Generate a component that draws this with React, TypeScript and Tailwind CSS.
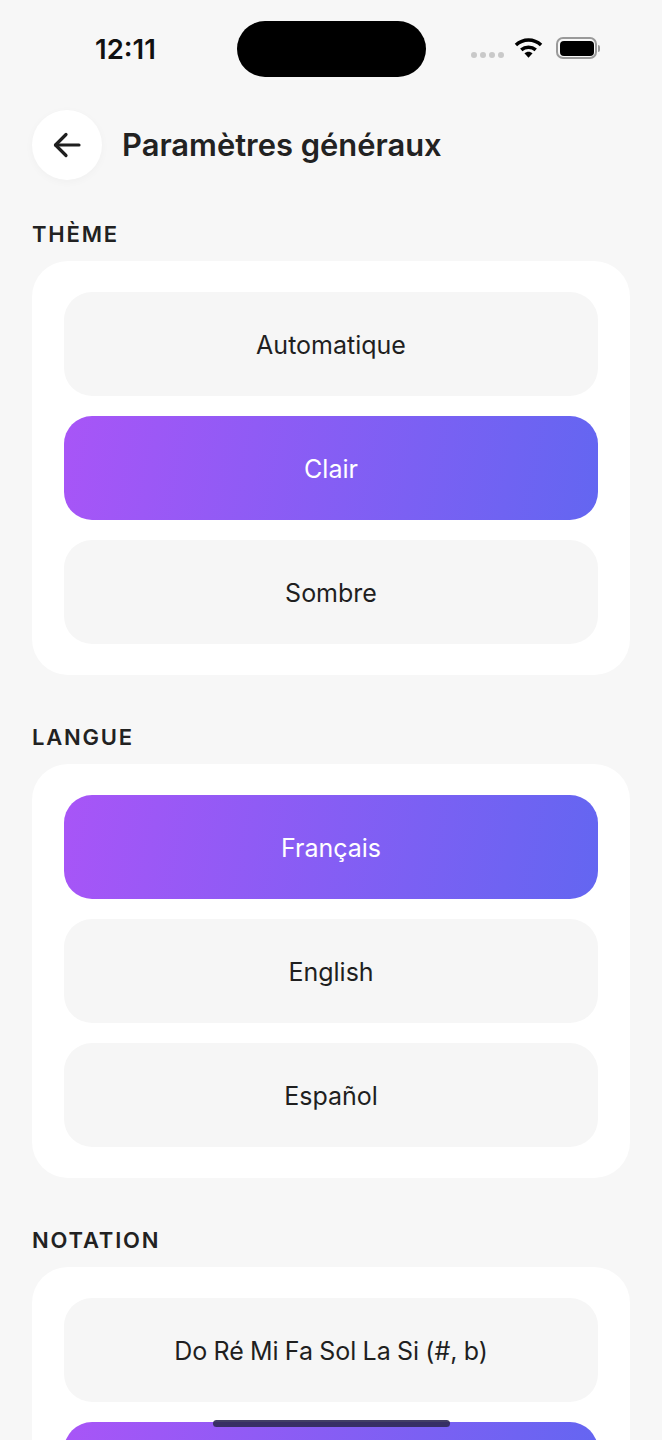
import React from "react";

// last notation option runs off the bottom of the screen, its label can't be seen
const sections = [
  { title: "THÈME", options: ["Automatique", "Clair", "Sombre"], active: 1 },
  { title: "LANGUE", options: ["Français", "English", "Español"], active: 0 },
  { title: "NOTATION", options: ["Do Ré Mi Fa Sol La Si (#, b)", ""], active: 1 },
];

const StatusBar = () => (
  <div className="relative flex h-[110px] items-start justify-between">
    <span className="ml-[95px] mt-[32px] text-[27.5px] leading-[34px] font-semibold text-[#111]">12:11</span>
    <div className="absolute left-[237px] top-[21px] h-[56px] w-[189px] rounded-[28px] bg-black" />
    <div className="mr-[62px] mt-[37px] flex items-center">
      <div className="mt-[14px] mr-[10px] flex gap-[3px]">
        {[0, 1, 2, 3].map((i) => (
          <div key={i} className="h-[6px] w-[6px] rounded-full bg-[#c9c9c9]" />
        ))}
      </div>
      <svg width="29" height="23" viewBox="0 0 30 22" className="mr-[13px] -mt-[1px]">
        <path d="M2 8.5C9.5 1.5 20.5 1.5 28 8.5" fill="none" stroke="#000" strokeWidth="3.6" />
        <path d="M7.5 13.5C11.8 9.8 18.2 9.8 22.5 13.5" fill="none" stroke="#000" strokeWidth="3.6" />
        <path d="M10.8 17L15 21.5 19.2 17C16.8 14.8 13.2 14.8 10.8 17Z" fill="#000" />
      </svg>
      <div className="flex items-center">
        <div className="flex h-[22px] w-[41px] items-center justify-center rounded-[7px] border-2 border-[#9a9a9a]">
          <div className="h-[15px] w-[34px] rounded-[4px] bg-black" />
        </div>
        <div className="ml-[1px] h-[7px] w-[2px] rounded-r-full bg-[#9a9a9a]" />
      </div>
    </div>
  </div>
);

const OptionButton = ({ label, active }: { label: string; active: boolean }) => (
  <div
    className={`flex h-[104px] items-center justify-center rounded-[28px] pt-[3px] text-[25px] [word-spacing:-0.8px] ${
      active
        ? "bg-[linear-gradient(100deg,#a855f7,#6366f1)] text-white"
        : "bg-[#f6f6f6] text-[#1f1f1f]"
    }`}
  >
    {label}
  </div>
);

export default function App() {
  return (
    <div className="relative h-[1440px] w-[662px] overflow-hidden bg-[#f7f7f7] font-['Inter',sans-serif]">
      <StatusBar />
      <div className="flex flex-col px-[32px]">
        <div className="mb-[39px] flex items-center gap-[20px]">
          <button className="flex h-[70px] w-[70px] items-center justify-center rounded-full bg-white shadow-[0_2px_8px_rgba(0,0,0,0.03)]">
            <svg width="32" height="32" viewBox="0 0 32 32" fill="none" stroke="#1f1f1f" strokeWidth="3.2" strokeLinecap="round" strokeLinejoin="round">
              <path d="M28 16H4.5" />
              <path d="M15 5.5L4.5 16 15 26.5" />
            </svg>
          </button>
          <h1 className="text-[30.9px] leading-[36px] font-semibold text-[#222]">Paramètres généraux</h1>
        </div>
        {sections.map((section) => (
          <div key={section.title} className="mb-[47px] flex flex-col">
            <div className="mb-[14px] h-[28px] pt-[1px] text-[22px] leading-[28px] font-semibold tracking-[1.8px] text-[#222]">
              {section.title}
            </div>
            <div className="flex flex-col gap-[20px] rounded-[36px] bg-white px-[32px] py-[31px]">
              {section.options.map((option, i) => (
                <OptionButton key={i} label={option} active={i === section.active} />
              ))}
            </div>
          </div>
        ))}
      </div>
      <div className="absolute left-[213px] top-[1420px] h-[7px] w-[237px] rounded-full bg-[#2f2a55]/90" />
    </div>
  );
}
